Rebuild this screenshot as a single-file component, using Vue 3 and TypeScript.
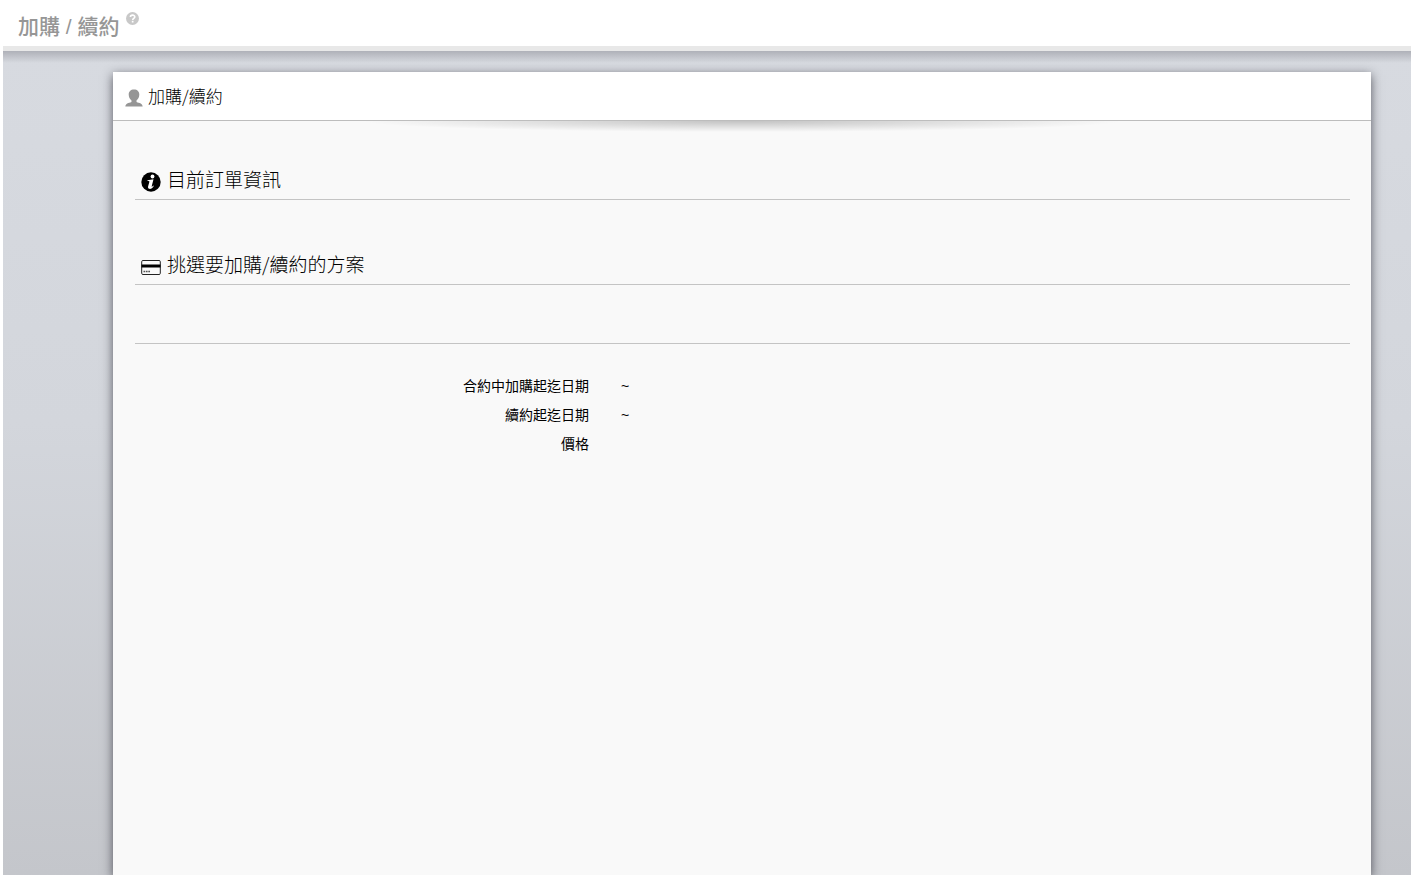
<script setup lang="ts">
interface DetailRow {
  label: string
  value: string
}

const rows: DetailRow[] = [
  { label: '合約中加購起迄日期', value: '~' },
  { label: '續約起迄日期', value: '~' },
  { label: '價格', value: '' },
]
</script>

<template>
  <div class="page">
    <header class="topbar">
      <h1>加購 / 續約</h1>
      <button class="help" type="button" aria-label="help">
        <svg viewBox="0 0 13 13" width="13" height="13" aria-hidden="true">
          <circle cx="6.5" cy="6.5" r="6.5" fill="#c8c8c8" />
          <path d="M4.4 5.1C4.4 2.5 8.8 2.5 8.8 4.9C8.8 6.4 6.7 6.3 6.7 7.9" fill="none" stroke="#fff" stroke-width="1.6" />
          <rect x="5.8" y="8.8" width="1.7" height="1.7" fill="#fff" />
        </svg>
      </button>
    </header>
    <main class="backdrop">
      <div class="panel">
        <div class="panel-head">
          <svg class="user" viewBox="0 0 18 18" width="18" height="18" aria-hidden="true">
            <path d="M9 .6C5.6.6 3.7 2.7 3.7 5.6C3.7 8.2 4.8 10.2 6.5 11.5V12.8C5.8 14 .7 13.7.3 17.4H17.7C17.3 13.7 12.2 14 11.5 12.8V11.5C13.2 10.2 14.3 8.2 14.3 5.6C14.3 2.7 12.4.6 9 .6Z" fill="#959595" />
          </svg>
          <h2>加購/續約</h2>
        </div>
        <div class="panel-body">
          <section class="group">
            <h3>
              <svg viewBox="0 0 20 20" width="20" height="20" aria-hidden="true">
                <circle cx="10" cy="10" r="9.7" fill="#000" />
                <circle cx="11.5" cy="4.5" r="1.9" fill="#fff" />
                <path d="M6.5 8.2L12.5 7.3L10.7 14.2C10.5 15.1 11.2 14.7 12.2 13.5L12.8 14C11.5 16.3 9.6 17.4 8 16.8C6.8 16.4 6.9 15.2 7.2 14.1L8.4 9.7C8.6 9 7.9 8.9 6.5 8.9Z" fill="#fff" />
              </svg>
              <span>目前訂單資訊</span>
            </h3>
          </section>
          <section class="group">
            <h3>
              <svg viewBox="0 0 20 20" width="20" height="20" aria-hidden="true">
                <rect x=".7" y="3.5" width="18.6" height="14" rx="1.2" fill="#fafafa" stroke="#222" stroke-width="1" />
                <path d="M.5 7.5H19.5V10.5H.5Z" fill="#000" />
                <path d="M2.5 14.5H9" stroke="#555" stroke-width="1.3" stroke-dasharray="1.7 .7" />
              </svg>
              <span>挑選要加購/續約的方案</span>
            </h3>
          </section>
          <hr />
          <table>
            <tbody>
              <tr v-for="row in rows" :key="row.label">
                <th scope="row">{{ row.label }}</th>
                <td>{{ row.value }}</td>
              </tr>
            </tbody>
          </table>
        </div>
      </div>
    </main>
  </div>
</template>

<style>
body {
  background: #fff;
}
</style>

<style scoped>
.page {
  display: flex;
  flex-direction: column;
  min-height: 100vh;
  padding-left: 3px;
  box-sizing: border-box;
  font-family: "Liberation Sans", "Noto Sans CJK TC", sans-serif;
  color: #000;
}
h1, h2, h3 {
  margin: 0;
  font-weight: 300;
}
h2, h3 {
  font-family: "Noto Sans CJK TC", sans-serif;
}
.topbar {
  display: flex;
  align-items: flex-start;
  gap: 6px;
  height: 46px;
  padding: 0 15px;
  border-bottom: 5px solid #e8e8e8;
}
h1 {
  padding-top: 12px;
  font-size: 21px;
  line-height: 30px;
  font-weight: 500;
  color: #969696;
}
.help {
  display: flex;
  margin-top: 12px;
  padding: 0;
  border: 0;
  background: none;
}
.backdrop {
  flex: 1;
  display: flex;
  padding: 21px 40px 0 110px;
  overflow: hidden;
  background:
    linear-gradient(rgba(90, 90, 100, 0.32), rgba(90, 90, 100, 0) 12px),
    linear-gradient(#d7dae0, #d3d6dc 45%, #c4c6cb);
}
.panel {
  flex: 1;
  background: #f9f9f9;
  box-shadow: 0 3px 10px rgba(30, 30, 40, 0.7);
}
.panel-head {
  display: flex;
  align-items: center;
  gap: 5px;
  height: 48px;
  padding: 0 12px;
  background: #fff;
  border-bottom: 1px solid #bdbdbd;
}
.user {
  margin-top: 4px;
}
h2 {
  font-size: 17px;
  line-height: 26px;
}
.panel-body {
  padding: 43px 21px 0 22px;
  background: radial-gradient(ellipse 380px 11px at 50% 0, rgba(0, 0, 0, 0.22), rgba(0, 0, 0, 0)) no-repeat;
}
.group {
  margin-bottom: 49px;
}
h3 {
  display: flex;
  align-items: flex-start;
  gap: 6px;
  height: 35px;
  padding: 0 6px;
  border-bottom: 1px solid #c4c4c4;
  font-size: 19px;
  line-height: 30px;
}
h3 svg {
  margin-top: 8px;
}
hr {
  margin: 58px 0 28px;
  border: 0;
  border-top: 1px solid #c4c4c4;
}
table {
  width: 100%;
  border-collapse: collapse;
  table-layout: fixed;
  font-size: 14px;
  line-height: 29px;
}
th, td {
  height: 29px;
  padding: 0;
}
th {
  width: 40%;
  padding-right: 32px;
  box-sizing: border-box;
  text-align: right;
  font-weight: 400;
}
</style>
